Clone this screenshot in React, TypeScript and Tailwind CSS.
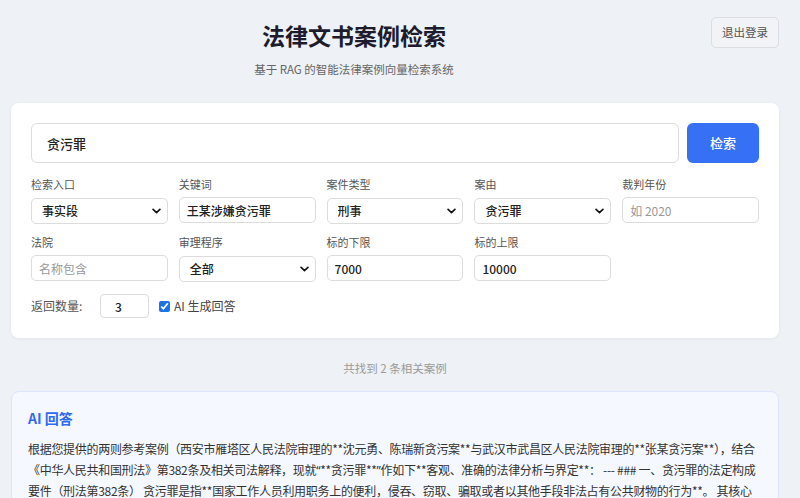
import { useState } from 'react'

const FONT = "font-['Noto_Sans_CJK_SC','Noto_Sans',sans-serif]"

function Chevron() {
  return (
    <svg
      viewBox="0 0 10 6"
      className="pointer-events-none absolute right-[7px] top-1/2 h-[6px] w-[9px] -translate-y-1/2"
      fill="none"
      stroke="#111"
      strokeWidth="1.8"
      strokeLinecap="round"
      strokeLinejoin="round"
    >
      <path d="M1.2 1.2 5 4.8 8.8 1.2" />
    </svg>
  )
}

function Field({ label, children }: { label: string; children: React.ReactNode }) {
  return (
    <div className="flex min-w-0 flex-col">
      <span className="mb-[6px] text-[11px] leading-[14px] text-[#555]">{label}</span>
      {children}
    </div>
  )
}

function SelectBox({ value, options }: { value: string; options: string[] }) {
  const [v, setV] = useState(value)
  return (
    <div className="relative">
      <select
        value={v}
        onChange={(e) => setV(e.target.value)}
        className="h-[26px] w-full appearance-none rounded-[5px] border border-[#dcdcdc] bg-white pl-[10px] pr-6 text-[12px] font-medium text-[#222] outline-none"
      >
        {options.map((o) => (
          <option key={o}>{o}</option>
        ))}
      </select>
      <Chevron />
    </div>
  )
}

function TextBox({ value, placeholder }: { value?: string; placeholder?: string }) {
  const [v, setV] = useState(value ?? '')
  return (
    <input
      value={v}
      placeholder={placeholder}
      onChange={(e) => setV(e.target.value)}
      className="h-[26px] w-full rounded-[5px] border border-[#dcdcdc] bg-white px-[7px] text-[12px] font-medium text-[#222] outline-none placeholder:font-normal placeholder:text-[#999]"
    />
  )
}

// narrow latin quotes, the CJK face draws them full width
const Q = ({ c }: { c: string }) => <span className="font-['Noto_Sans',sans-serif]">{c}</span>

export default function App() {
  const [query, setQuery] = useState('贪污罪')
  const [topK, setTopK] = useState('3')
  const [useAi, setUseAi] = useState(true)

  return (
    <div className={`min-h-screen bg-[#eef1f5] pl-[11px] pr-[21px] ${FONT}`}>
      <header className="flex items-start gap-[14px]">
        <div className="flex-1 pt-[20px] text-center">
          <h1 className="text-[23px] font-bold leading-[30px] text-[#1c1c2e]">法律文书案例检索</h1>
          <p className="mt-[11px] text-[11.5px] leading-[16px] text-[#666]">
            基于 RAG 的智能法律案例向量检索系统
          </p>
        </div>
        <button className="mt-[17px] h-[31px] w-[68px] rounded-[5px] border border-[#dadde2] bg-[#f1f3f6] text-[11.5px] text-[#555]">
          退出登录
        </button>
      </header>

      <section className="mt-[26px] rounded-[8px] bg-white px-[20px] pb-[20px] pt-[20px] shadow-[0_1px_4px_rgba(0,0,0,0.05)]">
        <div className="flex gap-[8px]">
          <input
            value={query}
            onChange={(e) => setQuery(e.target.value)}
            className="h-[40px] flex-1 rounded-[6px] border border-[#dcdcdc] px-[15px] text-[13px] font-medium text-[#222] outline-none"
          />
          <button className="h-[40px] w-[72px] rounded-[6px] bg-[#3670f4] text-[13px] font-medium text-white">
            检索
          </button>
        </div>

        <div className="mt-[14px] grid grid-cols-5 gap-x-[11px] gap-y-[11px]">
          <Field label="检索入口">
            <SelectBox value="事实段" options={['事实段', '裁判理由', '全文']} />
          </Field>
          <Field label="关键词">
            <TextBox value="王某涉嫌贪污罪" />
          </Field>
          <Field label="案件类型">
            <SelectBox value="刑事" options={['刑事', '民事', '行政']} />
          </Field>
          <Field label="案由">
            <SelectBox value="贪污罪" options={['贪污罪', '受贿罪', '挪用公款罪']} />
          </Field>
          <Field label="裁判年份">
            <TextBox placeholder="如 2020" />
          </Field>
          <Field label="法院">
            <TextBox placeholder="名称包含" />
          </Field>
          <Field label="审理程序">
            <SelectBox value="全部" options={['全部', '一审', '二审', '再审']} />
          </Field>
          <Field label="标的下限">
            <TextBox value="7000" />
          </Field>
          <Field label="标的上限">
            <TextBox value="10000" />
          </Field>
        </div>

        <div className="mt-[12px] flex items-center">
          <span className="w-[69px] shrink-0 text-[12px] text-[#555]">返回数量:</span>
          <input
            value={topK}
            onChange={(e) => setTopK(e.target.value)}
            className="h-[24px] w-[49px] rounded-[4px] border border-[#dcdcdc] pl-[14px] text-[12px] font-medium text-[#222] outline-none"
          />
          <label className="ml-[10px] flex items-center gap-[4px] text-[12px] text-[#444]">
            <input
              type="checkbox"
              checked={useAi}
              onChange={(e) => setUseAi(e.target.checked)}
              className="m-0 h-[11px] w-[11px] accent-[#1a73e8]"
            />
            AI 生成回答
          </label>
        </div>
      </section>

      <p className="mt-[22px] text-center text-[11.5px] leading-[16px] text-[#9a9a9a]">共找到 2 条相关案例</p>

      <section className="mt-[15px] overflow-hidden rounded-[8px] border border-[#dce5fb] bg-[#f5f8ff] px-[16px] pb-[16px] pt-[16px]">
        <h2 className="text-[14px] font-bold leading-[20px] text-[#2f6bf0]">AI 回答</h2>
        <div className="mt-[11px] text-[12px] leading-[20.5px] tracking-[-0.3px] text-[#333]">
          <div className="whitespace-nowrap">
            根据您提供的两则参考案例（西安市雁塔区人民法院审理的**沈元勇、陈瑞新贪污案**与武汉市武昌区人民法院审理的**张某贪污案**），结合
          </div>
          <div className="whitespace-nowrap">
            《中华人民共和国刑法》第382条及相关司法解释，现就<Q c="“" />**贪污罪**<Q c="”" />作如下**客观、准确的法律分析与界定**： --- ### 一、贪污罪的法定构成
          </div>
          <div className="whitespace-nowrap">
            要件（刑法第382条） 贪污罪是指**国家工作人员利用职务上的便利，侵吞、窃取、骗取或者以其他手段非法占有公共财物的行为**。 其核心
          </div>
        </div>
      </section>
    </div>
  )
}
